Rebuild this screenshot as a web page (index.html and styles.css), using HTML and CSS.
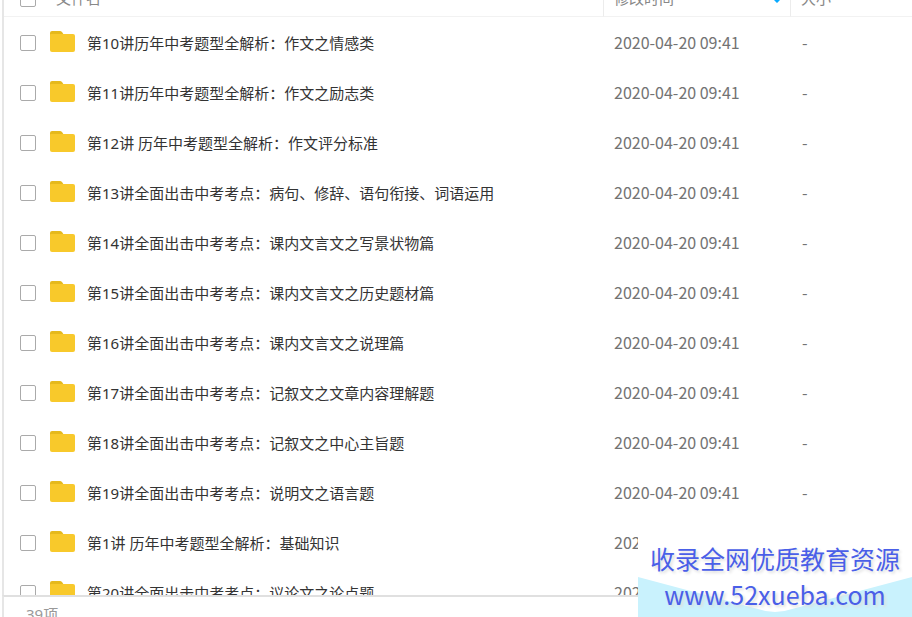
FILE: index.html
```html
<!DOCTYPE html>
<html lang="zh-CN">
<head>
    <meta charset="UTF-8">
    <meta name="viewport" content="width=device-width, initial-scale=1.0">
    <title>文件列表</title>
    <link rel="stylesheet" href="styles.css">
</head>
<body>
    <svg class="sprite" aria-hidden="true">
        <symbol id="folder" viewBox="0 0 25 22">
            <path fill="#e6b91c" d="M0 6V2q0-2 2-2h8q1 0 2 1l2 3v4H0z"/>
            <path fill="#f8c92b" d="M0 4q0-1 1-1h22q2 0 2 2v14q0 2-2 2H2q-2 0-2-2z"/>
        </symbol>
    </svg>

    <main class="file-list">
        <table>
            <thead>
                <tr>
                    <th class="check"><input type="checkbox" aria-label="全选"></th>
                    <th class="name">文件名</th>
                    <th class="time">
                        <div class="sort">
                            修改时间
                            <svg width="10" height="12" viewBox="0 0 10 12"><path fill="#09aaff" d="M3 0h4v6h3l-5 5-5-5h3z"/></svg>
                        </div>
                    </th>
                    <th class="size">大小</th>
                </tr>
            </thead>
            <tbody id="files"></tbody>
        </table>
    </main>
    <footer class="status">39项</footer>

    <aside class="watermark">
        <svg class="envelope" viewBox="0 0 274 87" preserveAspectRatio="none" aria-hidden="true">
            <path fill="#c9f2fd" d="M0 47l120 32q17 6 34 0l120-32v40H0z"/>
        </svg>
        <p class="slogan">收录全网优质教育资源</p>
        <a href="#">www.52xueba.com</a>
    </aside>

    <script src="files.js"></script>
</body>
</html>
```
FILE: styles.css
```css
* {
    box-sizing: border-box;
}
body {
    margin: 0;
    height: 100vh;
    display: flex;
    flex-direction: column;
    overflow: hidden;
    background: #fff;
    color: #424e67;
    font-family: "Noto Sans", "Noto Sans CJK SC", sans-serif;
    font-size: 15px;
}
.sprite {
    display: none;
}
.file-list {
    flex: 1;
    min-height: 0;
    overflow: hidden;
    margin-left: 2px;
    border-left: 2px solid #e6e6e6;
}
/* the list is scrolled a little, so the head is partly out of view */
table {
    width: 100%;
    margin-top: -21px;
    table-layout: fixed;
    border-collapse: separate;
    border-spacing: 0;
}
th {
    height: 38px;
    padding: 0 0 0 10px;
    border-bottom: 1px solid #f2f2f2;
    color: #888;
    font-weight: normal;
    text-align: left;
}
td {
    height: 50px;
    padding: 0 0 0 12px;
    color: #737373;
    font-family: "Noto Sans CJK SC", sans-serif;
    font-size: 16px;
    white-space: nowrap;
}
.check {
    width: 46px;
    padding: 2px 0 0 16px;
}
.name {
    padding-left: 6px;
}
.time {
    width: 187px;
}
.size {
    width: 122px;
}
th.time, th.size {
    border-left: 1px solid #ececec;
}
td.name {
    padding-left: 0;
    font-family: "Noto Sans", "Noto Sans CJK SC", sans-serif;
    font-size: 15px;
}
td.time {
    padding-left: 11px;
}
td label {
    display: flex;
    align-items: center;
    gap: 12px;
    color: #333;
}
.folder {
    width: 25px;
    height: 22px;
}
.sort {
    display: flex;
    align-items: center;
    justify-content: space-between;
    padding-right: 8px;
}
input {
    appearance: none;
    display: block;
    width: 16px;
    height: 16px;
    margin: 0;
    border: 1px solid #aaa;
    border-radius: 2px;
    background: #fff;
}
.status {
    height: 22px;
    margin-left: 2px;
    padding: 6px 0 0 22px;
    border-left: 2px solid #e6e6e6;
    border-top: 2px solid #e0e0e0;
    color: #999;
    font-size: 15px;
    line-height: 22px;
}
.watermark {
    position: fixed;
    right: 0;
    bottom: 0;
    width: 274px;
    padding: 10px 0 5px;
    background: #fff;
    color: #4a5fe8;
    font-family: "Noto Sans CJK SC", sans-serif;
    font-size: 25px;
    line-height: 36px;
    text-align: center;
    text-shadow: 2px 2px 3px #ddd;
}
.watermark p {
    position: relative;
    margin: 0;
}
.watermark a {
    position: relative;
    color: inherit;
    display: block;
    text-decoration: none;
}
.envelope {
    position: absolute;
    left: 0;
    top: 0;
    width: 100%;
    height: 100%;
}
```
FILE: files.js
```js
const files = [
    "第10讲历年中考题型全解析：作文之情感类",
    "第11讲历年中考题型全解析：作文之励志类",
    "第12讲 历年中考题型全解析：作文评分标准",
    "第13讲全面出击中考考点：病句、修辞、语句衔接、词语运用",
    "第14讲全面出击中考考点：课内文言文之写景状物篇",
    "第15讲全面出击中考考点：课内文言文之历史题材篇",
    "第16讲全面出击中考考点：课内文言文之说理篇",
    "第17讲全面出击中考考点：记叙文之文章内容理解题",
    "第18讲全面出击中考考点：记叙文之中心主旨题",
    "第19讲全面出击中考考点：说明文之语言题",
    "第1讲 历年中考题型全解析：基础知识",
    "第20讲全面出击中考考点：议论文之论点题"
];

document.getElementById("files").innerHTML = files.map((name, i) => `
    <tr>
        <td class="check"><input type="checkbox" id="file${i}"></td>
        <td class="name"><label for="file${i}"><svg class="folder"><use href="#folder"/></svg>${name}</label></td>
        <td class="time">2020-04-20 09:41</td>
        <td class="size">-</td>
    </tr>`).join("");
```
